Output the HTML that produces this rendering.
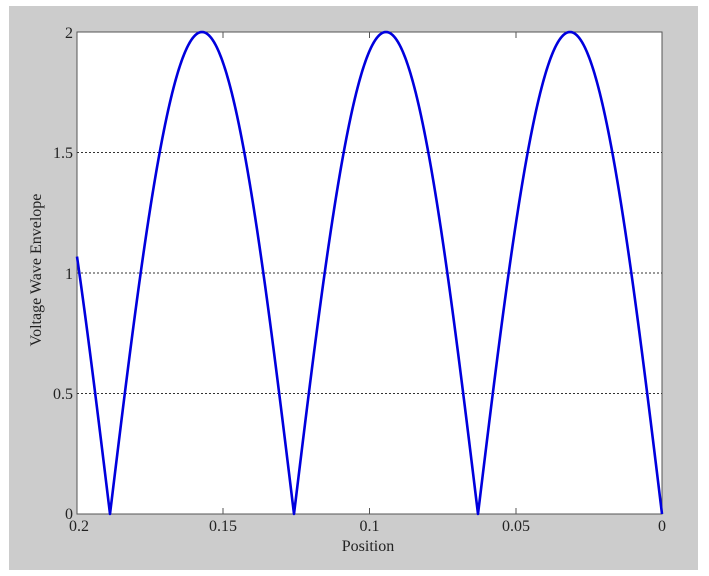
<!DOCTYPE html>
<html><head><style>
html,body{margin:0;padding:0;background:#fff;width:709px;height:576px;overflow:hidden}
</style></head><body>
<svg width="709" height="576" xmlns="http://www.w3.org/2000/svg" style="position:absolute;left:0;top:0">
<rect x="9" y="6" width="689" height="564" fill="#cccccc"/>
<rect x="77" y="32" width="585" height="482" fill="#fff" stroke="#555" stroke-width="1"/>
<g stroke="#333" stroke-width="1" stroke-dasharray="2,2">
<line x1="77" y1="152.5" x2="662" y2="152.5"/>
<line x1="77" y1="273" x2="662" y2="273"/>
<line x1="77" y1="393.5" x2="662" y2="393.5"/>
</g>
<g stroke="#555" stroke-width="1">
<line x1="223" y1="514" x2="223" y2="508"/><line x1="369.5" y1="514" x2="369.5" y2="508"/><line x1="516" y1="514" x2="516" y2="508"/>
<line x1="223" y1="32" x2="223" y2="38"/><line x1="369.5" y1="32" x2="369.5" y2="38"/><line x1="516" y1="32" x2="516" y2="38"/>
</g>
<path id="c" fill="none" stroke="#0000dd" stroke-width="2.6" stroke-linejoin="round"/>
<g font-family="Liberation Serif, serif" font-size="16" fill="#222">
<text x="73" y="38" text-anchor="end">2</text>
<text x="73" y="158" text-anchor="end">1.5</text>
<text x="73" y="279" text-anchor="end">1</text>
<text x="73" y="399" text-anchor="end">0.5</text>
<text x="73" y="519" text-anchor="end">0</text>
<text x="79" y="531" text-anchor="middle">0.2</text>
<text x="223" y="531" text-anchor="middle">0.15</text>
<text x="369.5" y="531" text-anchor="middle">0.1</text>
<text x="516" y="531" text-anchor="middle">0.05</text>
<text x="662" y="531" text-anchor="middle">0</text>
<text x="368" y="551" text-anchor="middle" font-size="16">Position</text>
<text transform="translate(41,270) rotate(-90)" text-anchor="middle" font-size="16">Voltage Wave Envelope</text>
</g>
</svg>
<script>
var d="";for(var x=77;x<=662;x+=0.5){var v=2*Math.abs(Math.sin((x-110)/184*Math.PI));var y=514-v*241;d+=(x==77?"M":"L")+x.toFixed(1)+" "+y.toFixed(2);}
document.getElementById("c").setAttribute("d",d);
</script>
</body></html>
